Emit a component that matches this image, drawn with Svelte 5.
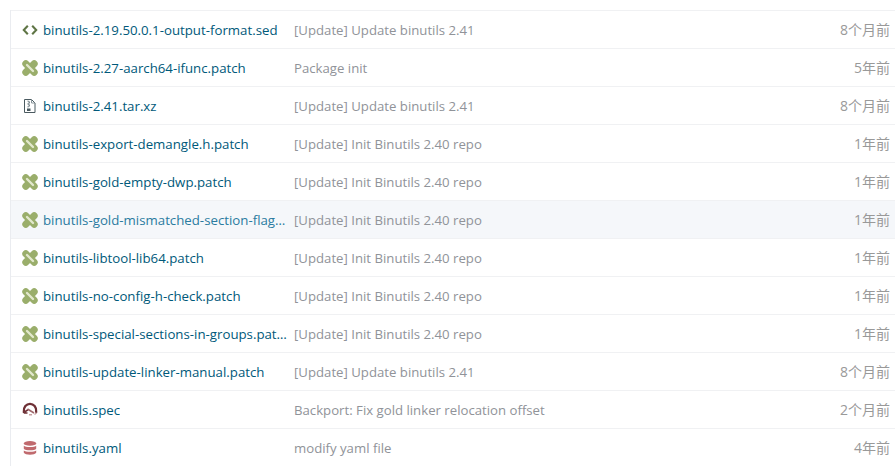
<script lang="ts">
  type Kind = 'code' | 'patch' | 'zip' | 'spec' | 'db';

  const files: { name: string; kind: Kind; message: string; age: string; hover?: boolean }[] = [
    { name: 'binutils-2.19.50.0.1-output-format.sed', kind: 'code', message: '[Update] Update binutils 2.41', age: '8个月前' },
    { name: 'binutils-2.27-aarch64-ifunc.patch', kind: 'patch', message: 'Package init', age: '5年前' },
    { name: 'binutils-2.41.tar.xz', kind: 'zip', message: '[Update] Update binutils 2.41', age: '8个月前' },
    { name: 'binutils-export-demangle.h.patch', kind: 'patch', message: '[Update] Init Binutils 2.40 repo', age: '1年前' },
    { name: 'binutils-gold-empty-dwp.patch', kind: 'patch', message: '[Update] Init Binutils 2.40 repo', age: '1年前' },
    { name: 'binutils-gold-mismatched-section-flags.patch', kind: 'patch', message: '[Update] Init Binutils 2.40 repo', age: '1年前', hover: true },
    { name: 'binutils-libtool-lib64.patch', kind: 'patch', message: '[Update] Init Binutils 2.40 repo', age: '1年前' },
    { name: 'binutils-no-config-h-check.patch', kind: 'patch', message: '[Update] Init Binutils 2.40 repo', age: '1年前' },
    { name: 'binutils-special-sections-in-groups.patch', kind: 'patch', message: '[Update] Init Binutils 2.40 repo', age: '1年前' },
    { name: 'binutils-update-linker-manual.patch', kind: 'patch', message: '[Update] Update binutils 2.41', age: '8个月前' },
    { name: 'binutils.spec', kind: 'spec', message: 'Backport: Fix gold linker relocation offset', age: '2个月前' },
    { name: 'binutils.yaml', kind: 'db', message: 'modify yaml file', age: '4年前' },
  ];
</script>

<div class="tree">
  {#each files as file}
    <div class="row" class:hover={file.hover}>
      <div class="name">
        <svg class="icon" viewBox="0 0 16 16" aria-hidden="true">
          {#if file.kind === 'code'}
            <path d="M5.800 3.800 1.800 8l4 4.200M10.200 3.800l4 4.200-4 4.200" fill="none" stroke="#5f7545" stroke-width="2.100" />
          {:else if file.kind === 'patch'}
            <path d="M3.800 3.800 12.200 12.200M12.200 3.800 3.800 12.200" fill="none" stroke="#9aae6b" stroke-width="7" stroke-linecap="round" />
            <path d="M5 5 11 11" stroke="#e2e8cc" stroke-width="2.400" stroke-linecap="round" />
          {:else if file.kind === 'zip'}
            <path d="M2.500 1.500h7l3.500 3.500v9.500h-10.500Z" fill="#fff" stroke="#4a5a60" stroke-width="1" />
            <path d="M9.500 1.500V5H13" fill="none" stroke="#8a979c" stroke-width="1" />
            <path d="M6 2.500v1.200h1.500v1.500H6v1.500h1.500v1.500H6v1.300" fill="none" stroke="#7b898e" stroke-width="1" />
            <rect x="5" y="10.500" width="3.500" height="2.500" fill="#4a5a60" />
          {:else if file.kind === 'spec'}
            <path d="M1.800 10C1.200 5 4.500 1.800 8 1.800s6.800 3.200 6.200 8.200" fill="none" stroke="#6e3036" stroke-width="2.300" stroke-linecap="round" />
            <path d="M2.500 10 6 7.800M2 11h3.500" stroke="#6e3036" stroke-width="1.600" />
            <path d="M5.500 7 12 11" stroke="#a0686c" stroke-width="1.500" />
            <path d="M12.500 12.500l2-1.800M7 12.800h3" stroke="#c9a3a5" stroke-width="1.400" />
          {:else}
            <ellipse cx="8" cy="3.400" rx="6.200" ry="2.400" fill="#c06a6e" />
            <path d="M1.800 5.800c1.200 1.700 11.200 1.700 12.400 0v3c-1.200 2-11.200 2-12.400 0ZM1.800 10.500c1.200 1.700 11.200 1.700 12.400 0v2.300c-1.200 2.600-11.200 2.600-12.400 0Z" fill="#c06a6e" />
          {/if}
        </svg>
        <a href="#top" class="link">{file.name}</a>
      </div>
      <div class="message">{file.message}</div>
      <div class="age">{file.age}</div>
    </div>
  {/each}
</div>

<style>
  :global(body){margin:0;background:#fff;overflow:hidden}
  .tree{margin:10px 0 0 10px;border-left:1px solid #eaecf0;font:13.25px/18px "Open Sans","Noto Sans CJK SC",sans-serif}
  .row{display:flex;align-items:center;height:37px;border-top:1px solid #f0f1f3;padding-left:11px;padding-right:5px}
  .row.hover{background:#f5f7fa}
  .name{display:flex;align-items:center;gap:5px;width:272px;flex:none;min-width:0}
  .icon{width:16px;height:16px;flex:none}
  .link{color:#00597a;text-decoration:none;overflow:hidden;white-space:nowrap;text-overflow:ellipsis;max-width:247px}
  .hover .link{color:#2a7ba0}
  .message{flex:1;min-width:0;color:#909399;white-space:nowrap;padding-top:1px;font-size:13.2px}
  .age{color:#999;white-space:nowrap;font-size:14px}
</style>
